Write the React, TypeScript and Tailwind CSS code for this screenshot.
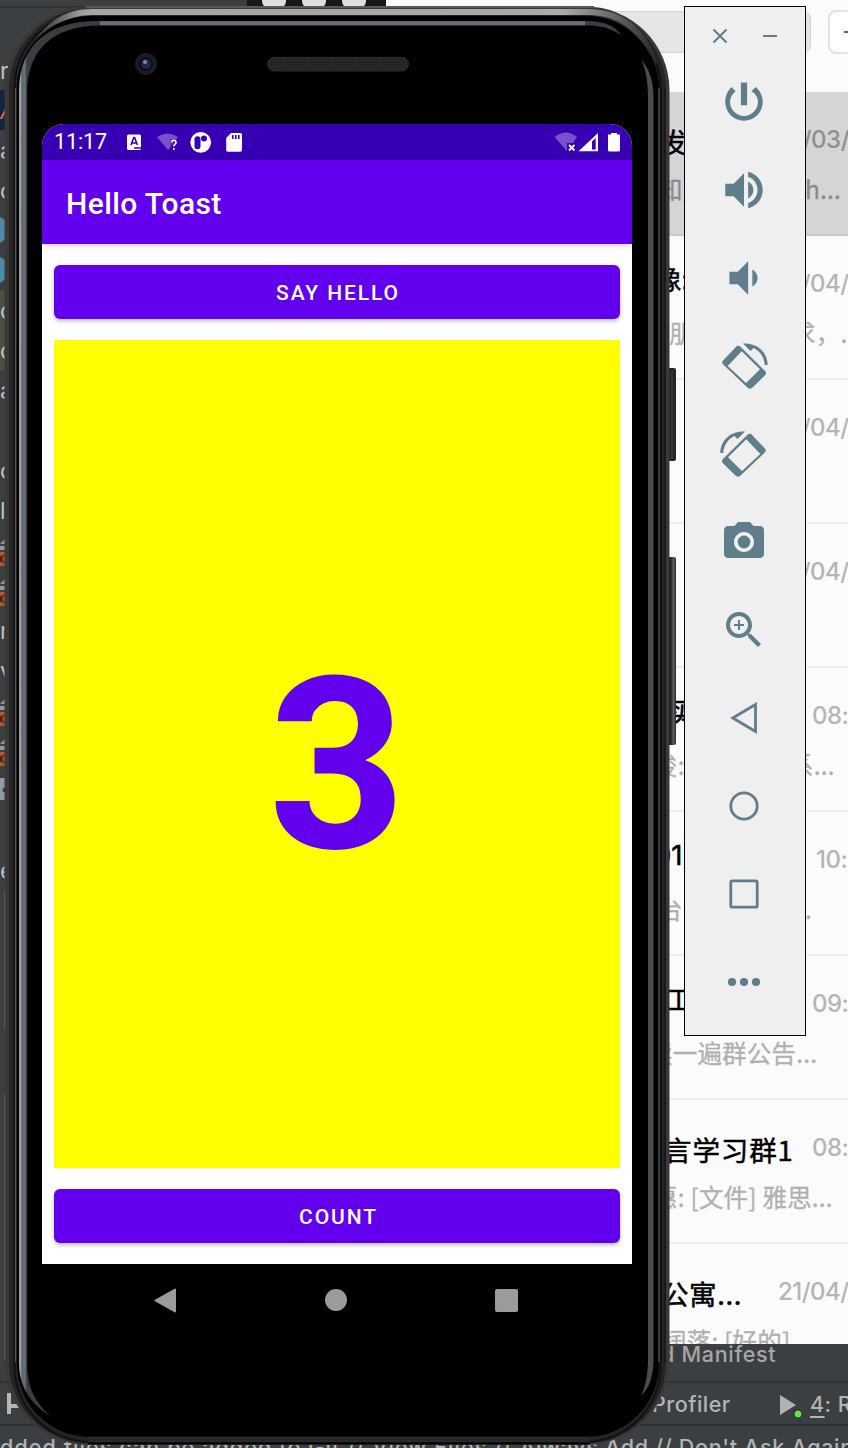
import React from 'react';

type Chat = {
  title: string;
  titleBox: string;
  time: string;
  lead: string;
  leadBox: string;
  tail: string;
  active?: boolean;
};

const chats: Chat[] = [
  { title: '发', titleBox: 'pl-[14px] w-[133px]', time: '21/03/', lead: '知', leadBox: 'pl-[12px] w-[159px]', tail: 'h...', active: true },
  { title: '像:', titleBox: 'pl-[8px] pb-[14px] w-[132px]', time: '21/04/', lead: '朋', leadBox: 'pl-[23px] w-[145px]', tail: '求，.' },
  { title: '', titleBox: 'w-[132px]', time: '21/04/', lead: '', leadBox: 'w-[145px]', tail: '' },
  { title: '', titleBox: 'w-[132px]', time: '21/04/', lead: '', leadBox: 'w-[145px]', tail: '' },
  { title: '买', titleBox: 'pl-[21px] pb-[12px] w-[166px]', time: '08:12', lead: '俊:', leadBox: 'pl-[7px] w-[143px]', tail: '系...' },
  { title: '01', titleBox: 'pl-[8px] pb-[12px] w-[170px] font-["Inter",sans-serif]', time: '10:24', lead: '台', leadBox: 'pl-[12px] w-[145px]', tail: '...' },
  { title: '工', titleBox: 'pl-[19px] pb-[14px] w-[166px]', time: '09:30', lead: '读一遍群公告...', leadBox: 'pl-[2px]', tail: '' },
  { title: '言学习群1', titleBox: 'pl-[18px] w-[166px] tracking-[0.9px]', time: '08:45', lead: '惠: [文件] 雅思...', leadBox: 'pl-[7px]', tail: '' },
  { title: '公寓...', titleBox: 'pl-[15px] w-[132px] tracking-[0.6px]', time: '21/04/', lead: '阔落: [好的]', leadBox: 'pl-[16px]', tail: '' },
];

function ChatWindow() {
  return (
    <div className="absolute left-[386px] top-0 flex h-[1344px] w-[462px] flex-col overflow-hidden bg-[#fbfbfb]">
      <div className="flex h-[92px] shrink-0 gap-[17px] pt-[10px]">
        <div className="mt-px h-[42px] w-[425px] shrink-0 rounded-[7px] border border-[#d2d2d2] bg-[#e5e5e5]" />
        <div className="flex h-[44px] w-[60px] shrink-0 items-center rounded-[8px] border-2 border-[#e2e2e2] bg-white pl-[14px]">
          <div className="h-[2px] w-[18px] bg-[#666]" />
        </div>
      </div>
      {chats.map((c, i) => (
        <div
          key={i}
          className={
            'flex h-[144px] shrink-0 flex-col border-b-2 pl-[260px] pt-[29px] whitespace-nowrap ' +
            (c.active ? 'border-[#c9c9c9] bg-[#d5d5d5]' : 'border-[#ededed]')
          }
        >
          <div className="flex h-[42px] shrink-0 items-center">
            <div className={'shrink-0 text-[27.5px] text-black [-webkit-text-stroke:0.5px_#000] ' + c.titleBox}>{c.title}</div>
            <div className={'shrink-0 pb-[4px] font-["Inter","Liberation_Sans",sans-serif] text-[24px] font-medium tracking-[-0.5px] ' + (c.active ? 'text-[#8f8f8f]' : 'text-[#b5b5b5]')}>
              {c.time}
            </div>
          </div>
          <div className={'mt-[8px] flex h-[36px] shrink-0 items-center text-[24.5px] tracking-[0.2px] ' + (c.active ? 'text-[#8a8a8a] [-webkit-text-stroke:0.3px_#8a8a8a]' : 'text-[#b0b0b0] [-webkit-text-stroke:0.3px_#b0b0b0]')}>
            <div className={'shrink-0 ' + c.leadBox}>{c.lead}</div>
            <div className="shrink-0">{c.tail}</div>
          </div>
        </div>
      ))}
    </div>
  );
}

type Sliver = { h: string; text?: string; kind?: 'xml' | 'hex' | 'tag' };

const slivers: Sliver[] = [
  { h: 'h-[40px] text-[#c0c3c5]', text: 'r' },
  { h: 'h-[40px] bg-[#10263f] text-[#d9675a] italic', text: 'A' },
  { h: 'h-[40px] text-[#c0c3c5]', text: 'a' },
  { h: 'h-[40px] text-[#c0c3c5]', text: 'c' },
  { h: 'h-[40px]', kind: 'hex' },
  { h: 'h-[40px]', kind: 'hex' },
  { h: 'h-[40px] bg-[#49513f] text-[#c0c3c5]', text: 'c' },
  { h: 'h-[40px] bg-[#49513f] text-[#c0c3c5]', text: 'c' },
  { h: 'h-[40px] text-[#c0c3c5]', text: 'a' },
  { h: 'h-[40px]' },
  { h: 'h-[40px] text-[#c0c3c5]', text: 'c' },
  { h: 'h-[40px] text-[#c0c3c5]', text: 'l' },
  { h: 'h-[40px]', kind: 'xml' },
  { h: 'h-[40px]', kind: 'xml' },
  { h: 'h-[40px] text-[#c0c3c5]', text: 'r' },
  { h: 'h-[40px] text-[#c0c3c5]', text: 'v' },
  { h: 'h-[40px]', kind: 'xml' },
  { h: 'h-[40px]', kind: 'xml' },
  { h: 'h-[40px]', kind: 'tag' },
  { h: 'h-[40px]' },
  { h: 'h-[40px] text-[#c0c3c5]', text: 'e' },
];

function SliverMark({ kind }: { kind: 'xml' | 'hex' | 'tag' }) {
  if (kind === 'hex')
    return (
      <svg width="12" height="40" viewBox="0 0 12 40" className="block">
        <path d="M0 7 L7 11 V28 L0 33Z" fill="#4f8ba8" />
      </svg>
    );
  if (kind === 'tag')
    return (
      <svg width="12" height="40" viewBox="0 0 12 40" className="block">
        <path d="M0 8h8v22H0z" fill="#8e9ba5" />
        <circle cx="5" cy="20" r="2.5" fill="#3c3f41" />
      </svg>
    );
  return (
    <svg width="12" height="40" viewBox="0 0 12 40" className="block">
      <path d="M0 14 L5 9 V14Z M0 16h6v4H0z" fill="#8e9ba5" />
      <path d="M0 22h6v14H0z" fill="#b5592c" />
      <path d="M4 25l-3.500 4L4 33M0 26l2 3-2 3" fill="none" stroke="#3b2419" strokeWidth="1.500" />
    </svg>
  );
}

function IdeWindow() {
  return (
    <div className="flex h-full w-full flex-col bg-[#3c3f41] font-['Inter','Liberation_Sans',sans-serif]">
      <div className="flex h-[8px] shrink-0 border-b-2 border-[#313335]">
        <div className="ml-[247px] flex h-[8px] w-[139px] gap-[16px] overflow-hidden bg-[#171717] pl-[15px]">
          <div className="-mt-[16px] h-[24px] w-[24px] shrink-0 rounded-[7px] bg-[#dedede]" />
          <div className="-mt-[16px] h-[24px] w-[24px] shrink-0 rounded-[7px] bg-[#dedede]" />
          <div className="-mt-[16px] h-[24px] w-[24px] shrink-0 rounded-[7px] bg-[#dedede]" />
        </div>
      </div>
      <div className="flex h-[1373px] shrink-0 justify-between pt-[42px]">
        <div className="w-[12px] overflow-hidden">
          {slivers.map((s, i) => (
            <div key={i} className={'flex items-center overflow-hidden text-[23px] ' + s.h}>
              {s.kind ? <SliverMark kind={s.kind} /> : <span className="pt-[2px]">{s.text}</span>}
            </div>
          ))}
          <div className="ml-[4px] h-[140px] w-[2px] bg-[#77797a]" />
          <div className="ml-[4px] mt-[64px] h-[266px] w-[2px] bg-[#77797a]" />
        </div>
        <div className="w-[187px] self-end pb-[12px] text-[21.5px] leading-[30px] font-medium tracking-[0.7px] text-[#a5a7a8]">d Manifest</div>
      </div>
      <div className="flex h-[45px] shrink-0 items-center border-y-2 border-[#323232] text-[21.5px] font-medium tracking-[0.5px] text-[#b2b4b5]">
        <div className="w-[652px] shrink-0 pl-[6px]">
          <svg width="20" height="24" viewBox="0 0 20 24">
            <path d="M3 1v21M3 14h14" fill="none" stroke="#b4b6b8" strokeWidth="4" />
          </svg>
        </div>
        <div className="w-[127px] shrink-0 pt-[2px]">Profiler</div>
        <svg width="26" height="26" viewBox="0 0 26 26" className="mt-[2px] shrink-0">
          <path d="M1 3l16 10-16 10z" fill="#afb1b3" />
          <circle cx="19" cy="22" r="4.500" fill="#222" />
          <circle cx="19" cy="22" r="3.500" fill="#62e83e" />
        </svg>
        <div className="shrink-0 pl-[5px] pt-[2px] whitespace-nowrap"><span className="underline underline-offset-4">4</span>: Run</div>
      </div>
      <div className="flex h-[22px] shrink-0 justify-between overflow-hidden pt-[7px] text-[21.5px] leading-[28px] font-medium whitespace-nowrap text-[#b2b4b5]">
        <div className="tracking-[1.1px]">dded files can be added to Git // View Files //</div>
        <div className="w-[328px] tracking-[0.7px]">Always Add // Don't Ask Again</div>
      </div>
    </div>
  );
}

function PhoneShell() {
  return (
    <svg className="absolute inset-0" width="848" height="1448" viewBox="0 0 848 1448">
      <defs>
        <linearGradient id="topShine" x1="20" x2="660" y1="0" y2="0" gradientUnits="userSpaceOnUse">
          <stop offset="0" stopColor="#222" />
          <stop offset="0.05" stopColor="#555" />
          <stop offset="0.1" stopColor="#a3a3a8" />
          <stop offset="0.85" stopColor="#a9a9ae" />
          <stop offset="0.96" stopColor="#4a4a4c" />
          <stop offset="1" stopColor="#222" />
        </linearGradient>
        <linearGradient id="sideShine" x1="19" x2="27" y1="0" y2="0" gradientUnits="userSpaceOnUse">
          <stop offset="0" stopColor="#a3a3a3" />
          <stop offset="0.25" stopColor="#999b9f" />
          <stop offset="0.35" stopColor="#5c6269" />
          <stop offset="0.7" stopColor="#6a727b" />
          <stop offset="1" stopColor="#3a3e43" />
        </linearGradient>
        <linearGradient id="key" x1="670" x2="677" y1="0" y2="0" gradientUnits="userSpaceOnUse">
          <stop offset="0" stopColor="#151515" />
          <stop offset="0.5" stopColor="#5c5c5c" />
          <stop offset="1" stopColor="#161616" />
        </linearGradient>
        <pattern id="mesh" width="3" height="3" patternUnits="userSpaceOnUse">
          <rect width="3" height="3" fill="#1f2120" />
          <path d="M0 0h1v1H0zM1.500 1.500h1v1h-1z" fill="#343735" />
        </pattern>
      </defs>
      <rect x="668" y="368" width="8" height="93" rx="2" fill="#252525" />
      <path d="M672 371v88" stroke="#353535" strokeWidth="2" />
      <rect x="668" y="557" width="8" height="188" rx="2" fill="url(#key)" />
      <rect x="4.500" y="6.500" width="665" height="1438.500" rx="84" fill="#3c3838" />
      <path d="M86 7H594" stroke="#5d5757" strokeWidth="2" />
      <rect x="9" y="9" width="657" height="1434" rx="80" fill="#242424" />
      <rect x="14.500" y="12" width="646" height="1430" rx="76" fill="none" stroke="#111" strokeWidth="2" />
      <path d="M28 62C40 31 60 12 92 12H588C623 12 646 34 655 64" fill="none" stroke="url(#topShine)" strokeWidth="6" />
      <rect x="17" y="16" width="642" height="1421" rx="73" fill="#000" />
      <path d="M15.500 88V1362" stroke="#585858" strokeWidth="1" />
      <path d="M659 88V1362" stroke="#3b3b3d" strokeWidth="2" />
      <path d="M661.500 88V1362M665 88V1362" stroke="#111" strokeWidth="1" />
      <path d="M19 1362V92C19 45 48 21 98 21H585C605 21 615 26 621 35C608 27 600 25.500 585 25.500H100C52 26 27 50 27 94V1362C27 1385 33 1400 50 1416C28 1402 19 1384 19 1362Z" fill="url(#sideShine)" />
      <path d="M100 23.250H585" stroke="#6d6d74" strokeWidth="4" />
      <path d="M641 59C650 70 653.500 82 653.500 98V1358C653.500 1375 650 1387 641 1396C646 1385 648 1373 648 1358V98C648 82 646 70 641 59Z" fill="#4b4b50" />
      <path d="M88 1439.500H590" stroke="#292929" strokeWidth="6" />
      <path d="M88 1443.500H590" stroke="#000" strokeWidth="2" />
      <circle cx="146" cy="64" r="11" fill="#1c1c1e" />
      <circle cx="146" cy="64" r="7" fill="#0c0d16" />
      <circle cx="146" cy="64" r="5" fill="#1d2850" />
      <circle cx="145" cy="62" r="2" fill="#7b8cad" />
      <rect x="267.500" y="57.500" width="141" height="13.500" rx="6.700" fill="url(#mesh)" stroke="#2b2d2c" />
    </svg>
  );
}

function StatusBar() {
  return (
    <div className="flex h-[36px] shrink-0 items-center bg-[#3700b3] pl-[12px] text-white">
      <div className="w-[73px] pt-px text-[21.5px] tracking-[-0.1px]">11:17</div>
      <svg width="115" height="24" viewBox="127 130 115 24" className="shrink-0">
        <rect x="127" y="134.500" width="14" height="15.500" rx="1.500" fill="#fff" />
        <path d="M131 145l2.800-7.500h.8l2.800 7.500M132 143h4.300M134 148h7" fill="none" stroke="#3700b3" strokeWidth="1.600" />
        <path d="M157 137Q167.500 130 178 137L174 143L168 150Z" fill="#fff" opacity=".32" />
        <path d="M170 139h10v13h-9z" fill="#3700b3" opacity=".55" />
        <path d="M171.600 142.500q0-2.200 2.200-2.200t2.200 2.100q0 1.200-1.200 2-1 .7-1 2M173.800 148v2" fill="none" stroke="#fff" strokeWidth="1.600" />
        <circle cx="200.700" cy="142.300" r="10.400" fill="#fff" />
        <rect x="194.500" y="136.200" width="6" height="13" rx="3" fill="#3700b3" />
        <circle cx="204" cy="138.500" r="3" fill="#3700b3" />
        <path d="M231 133h9.500q1.500 0 1.500 1.500V150q0 1.800-1.800 1.800H228q-1.800 0-1.800-1.800v-12z" fill="#fff" />
        <path d="M232.800 135v4M235.800 135v4M238.800 135v4" stroke="#3700b3" strokeWidth="1.600" />
      </svg>
      <svg width="66" height="24" viewBox="554 130 66 24" className="ml-auto mr-[12px] shrink-0">
        <path d="M554.500 137Q566 128 577 137L573 143H567V151Z" fill="#fff" opacity=".32" />
        <path d="M569 145l5.500 5.500m0-5.500l-5.500 5.500" stroke="#fff" strokeWidth="1.800" />
        <path d="M598 133v18.300h-19.500z" fill="#fff" />
        <path d="M592 141.500l3.700-3.500V149.500h-3.700z" fill="#3700b3" />
        <path d="M611 133h6v1.500h3V150q0 1.500-1.500 1.500h-9q-1.500 0-1.500-1.500V134.500h3z" fill="#fff" />
      </svg>
    </div>
  );
}

function PhoneScreen() {
  return (
    <div className="absolute left-[42px] top-[124px] flex w-[590px] flex-col font-['Roboto',sans-serif]">
      <div className="flex h-[1140px] flex-col overflow-hidden rounded-t-[22px] bg-white">
        <StatusBar />
        <div className="flex h-[84px] shrink-0 items-center bg-[#6200ee] pl-[24px] pt-[3px] text-[30px] font-medium tracking-[0.4px] text-white shadow-[0_1px_6px_rgba(0,0,0,0.22)]">
          Hello Toast
        </div>
        <div className="flex flex-1 flex-col px-[12px] pb-[21px] pt-[21px]">
          <button className="h-[54px] shrink-0 rounded-[6px] bg-[#6200ee] pt-[4px] pl-[2px] text-[21px] font-medium tracking-[1.9px] text-white shadow-[0_2px_4px_rgba(0,0,0,0.28)]">
            SAY HELLO
          </button>
          <div className="my-[21px] flex flex-1 items-center justify-center bg-[#ffff00] text-[240px] leading-none font-bold text-[#6200ee]">
            <span className="pt-[24px]">3</span>
          </div>
          <button className="h-[54px] shrink-0 rounded-[6px] bg-[#6200ee] pt-[4px] pl-[3px] text-[21px] font-medium tracking-[1.9px] text-white shadow-[0_2px_4px_rgba(0,0,0,0.28)]">
            COUNT
          </button>
        </div>
      </div>
      <div className="flex h-[72px] items-center justify-between bg-black pl-[112px] pr-[114px]">
        <svg width="23" height="25" viewBox="0 0 23 25">
          <path d="M1.500 12.500L21 1.500V23.500Z" fill="#9b9b9b" stroke="#9b9b9b" strokeWidth="2" strokeLinejoin="round" />
        </svg>
        <div className="h-[22px] w-[22px] rounded-full bg-[#9b9b9b]" />
        <div className="h-[23px] w-[23px] rounded-[2px] bg-[#9b9b9b]" />
      </div>
    </div>
  );
}

function Tool({ size, children }: { size: number; children: React.ReactNode }) {
  return (
    <button className="flex h-[88px] w-full shrink-0 items-center justify-center">
      <svg width={size} height={size} viewBox="0 0 24 24" fill="#607d8b" className="overflow-visible">
        {children}
      </svg>
    </button>
  );
}

function RotateArt() {
  return (
    <>
      <path d="M-20.500 -6L-8.300 -18.800Q-6 -21.500 -3.200 -19L20.800 4.800Q23.300 7 20.800 9.500L8.800 21.300Q6 24 3.400 21.400L-20.500 -1.200Q-23 -3.500 -20.500 -6ZM-16.300 0L2 17L16 3.300L-2.300 -14.700Z" fillRule="evenodd" />
      <path d="M-1 -22.500C13 -23.500 23.500 -14 23.700 -1H20.800C20 -9 16 -15 9.500 -18L6.500 -15Z" />
    </>
  );
}

function EmulatorToolbar() {
  return (
    <div className="absolute left-[684px] top-[6px] flex h-[1030px] w-[122px] flex-col border border-black bg-[#efefef] pr-[2px]">
      <div className="flex h-[51px] shrink-0 items-center pl-[27px] pt-[7px]">
        <svg width="66" height="16" viewBox="0 0 66 16">
          <path d="M1.500 1.500l13 13m0-13l-13 13M51 8h14" stroke="#607d8b" strokeWidth="2" fill="none" />
        </svg>
      </div>
      <Tool size={50}>
        <path d="M13.500 2.600h-3v11h3v-11zm4.100 2.200l-2 2C17.600 7.900 18.700 9.900 18.700 12c0 3.700-3 6.700-6.700 6.700s-6.700-3-6.700-6.700c0-2.100 1-4 2.700-5.200l-2-2C4.200 6.500 3 9.100 3 12c0 5 4 9 9 9s9-4 9-9c0-2.900-1.300-5.500-3.400-7.200z" />
      </Tool>
      <Tool size={50}>
        <path d="M3 9v6h4l5 5V4L7 9H3zm13.500 3c0-1.770-1.020-3.290-2.500-4.030v8.050c1.480-.73 2.500-2.250 2.500-4.020zM14 3.230v2.560c2.700.76 4.500 3.340 4.500 6.210s-1.800 5.450-4.500 6.210v2.560c4.010-.91 7-4.490 7-8.770s-2.990-7.860-7-8.770z" />
      </Tool>
      <Tool size={50}>
        <path d="M18.500 12c0-1.770-1.020-3.290-2.500-4.030v8.050c1.480-.73 2.500-2.250 2.500-4.020zM5 9v6h4l5 5V4L9 9H5z" />
      </Tool>
      <Tool size={24}>
        <g transform="translate(12 12)"><RotateArt /></g>
      </Tool>
      <Tool size={24}>
        <g transform="translate(12 12) scale(-1 1)"><RotateArt /></g>
      </Tool>
      <Tool size={48}>
        <circle cx="12" cy="12" r="3.200" />
        <path d="M9 2L7.170 4H4c-1.100 0-2 .9-2 2v12c0 1.100.9 2 2 2h16c1.100 0 2-.9 2-2V6c0-1.100-.9-2-2-2h-3.170L15 2H9zm3 15c-2.760 0-5-2.240-5-5s2.240-5 5-5 5 2.240 5 5-2.240 5-5 5z" />
      </Tool>
      <Tool size={48}>
        <path d="M15.500 14h-.79l-.28-.27C15.410 12.590 16 11.110 16 9.500 16 5.910 13.090 3 9.500 3S3 5.910 3 9.500 5.910 16 9.500 16c1.610 0 3.090-.59 4.230-1.570l.27.28v.79l5 4.990L20.490 19l-4.990-5zm-6 0C7.010 14 5 11.990 5 9.500S7.010 5 9.500 5 14 7.010 14 9.500 11.990 14 9.500 14z" />
        <path d="M12 10h-2v2H9v-2H7V9h2V7h1v2h2v1z" />
      </Tool>
      <Tool size={24}>
        <path d="M.8 12L23.500-1.500V25.500Z" fill="none" stroke="#607d8b" strokeWidth="2.800" />
      </Tool>
      <Tool size={24}>
        <circle cx="12" cy="12" r="13.200" fill="none" stroke="#607d8b" strokeWidth="2.800" />
      </Tool>
      <Tool size={24}>
        <rect x="-1.200" y="-1.200" width="26.400" height="26.400" rx="1.500" fill="none" stroke="#607d8b" strokeWidth="2.800" />
      </Tool>
      <Tool size={24}>
        <circle cx="0" cy="12" r="4.100" />
        <circle cx="12" cy="12" r="4.100" />
        <circle cx="24" cy="12" r="4.100" />
      </Tool>
    </div>
  );
}

export default function App() {
  return (
    <div className="relative h-[1448px] w-[848px] overflow-hidden font-['Noto_Sans_CJK_SC',sans-serif]">
      <IdeWindow />
      <ChatWindow />
      <PhoneShell />
      <PhoneScreen />
      <EmulatorToolbar />
    </div>
  );
}
